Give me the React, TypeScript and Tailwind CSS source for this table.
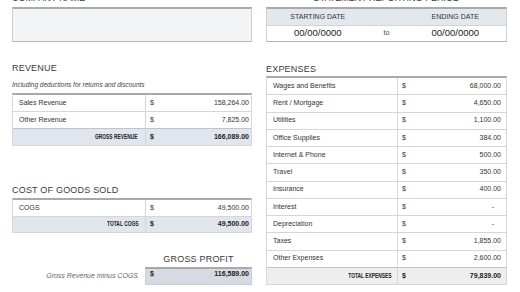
import React from 'react';

const font = { fontFamily: '"Liberation Sans", Arial, sans-serif' };

type Row = { label: string; value: string };

const expenses: Row[] = [
  { label: 'Wages and Benefits', value: '68,000.00' },
  { label: 'Rent / Mortgage', value: '4,650.00' },
  { label: 'Utilities', value: '1,100.00' },
  { label: 'Office Supplies', value: '384.00' },
  { label: 'Internet & Phone', value: '500.00' },
  { label: 'Travel', value: '350.00' },
  { label: 'Insurance', value: '400.00' },
  { label: 'Interest', value: '-' },
  { label: 'Depreciation', value: '-' },
  { label: 'Taxes', value: '1,855.00' },
  { label: 'Other Expenses', value: '2,600.00' },
];

const Heading: React.FC<{ children: React.ReactNode; className?: string }> = ({ children, className = '' }) => (
  <div className={`h-[12px] leading-[12px] text-[9px] text-[#3a3a3a] tracking-[0.2px] ${className}`}>{children}</div>
);

const Money: React.FC<{ value: string; bold?: boolean; pr: string }> = ({ value, bold, pr }) => (
  <div className={`flex items-center justify-between pl-[4px] ${pr} ${bold ? 'font-bold text-[#222]' : ''}`}>
    <span>$</span>
    <span className={value === '-' ? 'pr-[7px]' : ''}>{value}</span>
  </div>
);

const TotalLabel: React.FC<{ children: React.ReactNode; pr: string }> = ({ children, pr }) => (
  <div className={`flex items-center justify-end ${pr} border-r border-[#d6d6d6]`}>
    <span className="inline-block origin-right scale-x-[0.74] font-bold text-[6.6px] text-[#222] whitespace-nowrap">
      {children}
    </span>
  </div>
);

const App: React.FC = () => {
  return (
    <div style={font} className="w-[520px] h-[292px] overflow-hidden bg-white text-[#333] flex gap-[14px] pl-[12px]">
      {/* left column */}
      <div className="w-[240px] flex flex-col">
        <div className="h-[7px] flex items-end">
          <span className="text-[9px] leading-none mb-[4px] text-[#3a3a3a]">COMPANY NAME</span>
        </div>
        <div className="h-[35px] bg-[#f3f4f6] border border-[#d0d0d0] border-t-2 border-t-[#a9a9a9] border-b-[#b5b5b5]" />

        <Heading className="mt-[20px]">REVENUE</Heading>
        <div className="mt-[6px] h-[10px] leading-[10px] text-[6.5px] italic text-[#444]">
          Including deductions for returns and discounts
        </div>
        <div className="mt-[3px] border border-[#d6d6d6] border-t-2 border-t-[#a9a9a9] text-[7px]">
          {[
            { label: 'Sales Revenue', value: '158,264.00' },
            { label: 'Other Revenue', value: '7,825.00' },
          ].map((r) => (
            <div key={r.label} className="grid grid-cols-[133px_1fr] h-[17px] border-b border-[#d6d6d6]">
              <div className="flex items-center pl-[6px] border-r border-[#d6d6d6]">{r.label}</div>
              <Money value={r.value} pr="pr-[2px]" />
            </div>
          ))}
          <div className="grid grid-cols-[133px_1fr] h-[17px] bg-[#e1e5ed] border-t border-t-[#bfc3ca] -mt-px">
            <TotalLabel pr="pr-[7px]">GROSS REVENUE</TotalLabel>
            <Money value="166,089.00" bold pr="pr-[2px]" />
          </div>
        </div>

        <Heading className="mt-[38px]">COST OF GOODS SOLD</Heading>
        <div className="mt-[2px] border border-[#d6d6d6] border-t-2 border-t-[#a9a9a9] text-[7px]">
          <div className="grid grid-cols-[133px_1fr] h-[16.5px] border-b border-[#d6d6d6]">
            <div className="flex items-center pl-[6px] border-r border-[#d6d6d6]">COGS</div>
            <Money value="49,500.00" pr="pr-[2px]" />
          </div>
          <div className="grid grid-cols-[133px_1fr] h-[15.5px] bg-[#e1e5ed]">
            <TotalLabel pr="pr-[7px]">TOTAL COGS</TotalLabel>
            <Money value="49,500.00" bold pr="pr-[2px]" />
          </div>
        </div>

        <div className="mt-[20px] grid grid-cols-[133px_1fr]">
          <div />
          <Heading className="text-center">GROSS PROFIT</Heading>
        </div>
        <div className="mt-[2px] grid grid-cols-[133px_1fr] h-[18px] text-[7px]">
          <div className="flex items-center justify-end pr-[7px] italic text-[#666]">Gross Revenue minus COGS</div>
          <div className="bg-[#d5dae3] border border-[#c9cdd4] border-t-2 border-t-[#a9a9a9]">
            <Money value="116,589.00" bold pr="pr-[2px]" />
          </div>
        </div>
      </div>

      {/* right column */}
      <div className="w-[241px] flex flex-col">
        <div className="h-[7px] flex items-end justify-center">
          <span className="text-[9px] leading-none mb-[4px] text-[#3a3a3a]">STATEMENT REPORTING PERIOD</span>
        </div>
        <div className="h-[35px] border border-[#d0d0d0] border-t-2 border-t-[#a9a9a9] border-b-[#b5b5b5]">
          <div className="grid grid-cols-[1fr_36px_1fr] h-[17px] bg-[#e3e7ee] border-b border-[#cfd3da] text-[7px] text-[#333]">
            <div className="flex items-center justify-center">STARTING DATE</div>
            <div />
            <div className="flex items-center justify-center">ENDING DATE</div>
          </div>
          <div className="grid grid-cols-[1fr_36px_1fr] h-[15px] text-[9.5px] text-[#222]">
            <div className="flex items-center justify-center">00/00/0000</div>
            <div className="flex items-center justify-center text-[7px] text-[#444]">to</div>
            <div className="flex items-center justify-center">00/00/0000</div>
          </div>
        </div>

        <Heading className="mt-[21px]">EXPENSES</Heading>
        <div className="mt-[1px] border border-[#d6d6d6] border-t-2 border-t-[#a9a9a9] text-[7px]">
          {expenses.map((r) => (
            <div key={r.label} className="grid grid-cols-[131px_1fr] h-[17.25px] border-b border-[#d6d6d6]">
              <div className="flex items-center pl-[6px] border-r border-[#d6d6d6]">{r.label}</div>
              <Money value={r.value} pr="pr-[5px]" />
            </div>
          ))}
          <div className="grid grid-cols-[131px_1fr] h-[17.25px] bg-[#eeeeee] border-t border-t-[#c4c4c4] -mt-px">
            <TotalLabel pr="pr-[5px]">TOTAL EXPENSES</TotalLabel>
            <Money value="79,839.00" bold pr="pr-[5px]" />
          </div>
        </div>
      </div>
    </div>
  );
};

export default App;
